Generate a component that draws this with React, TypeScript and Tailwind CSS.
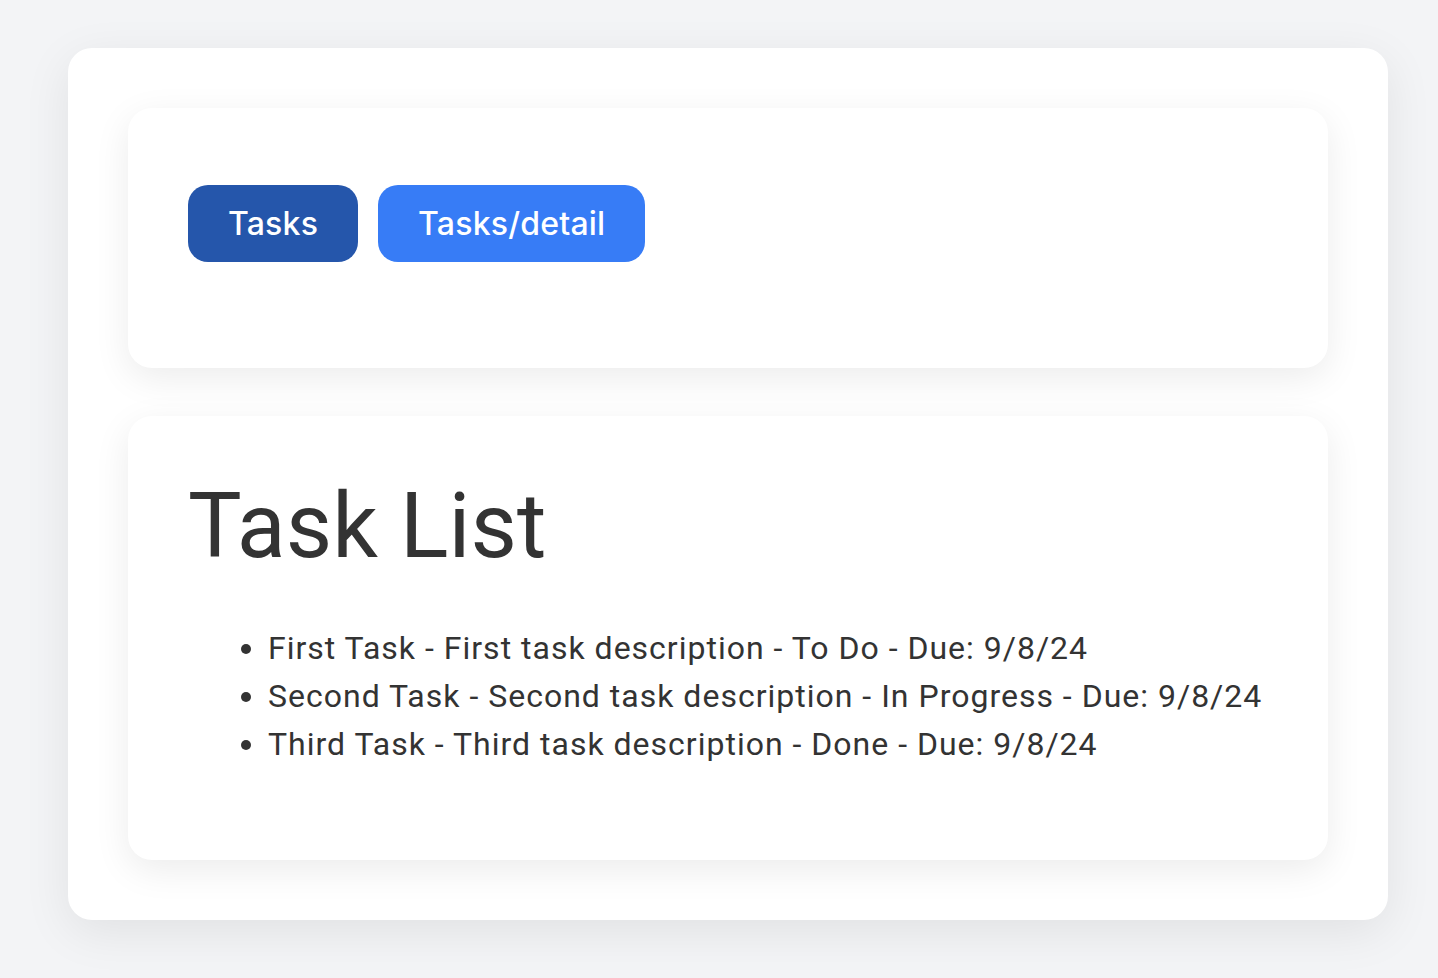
import React from "react";

export default function App() {
  const tasks = [
    "First Task - First task description - To Do - Due: 9/8/24",
    "Second Task - Second task description - In Progress - Due: 9/8/24",
    "Third Task - Third task description - Done - Due: 9/8/24",
  ];
  return (
    <div className="min-h-[978px] w-full bg-[#f3f4f6] pt-[48px] pb-[58px] pl-[68px]" style={{ fontFamily: "Roboto, 'Noto Sans', sans-serif" }}>
      <div className="w-[1320px] rounded-[24px] bg-white p-[60px] shadow-[0_12px_48px_rgba(0,0,0,0.08)] flex flex-col gap-[48px]">
        <div className="rounded-[24px] bg-white px-[60px] pt-[77px] pb-[106px] shadow-[0_10px_36px_rgba(0,0,0,0.08)]">
          <div className="flex gap-[20px]" style={{ fontFamily: "Inter, 'Noto Sans', sans-serif" }}>
            <button className="h-[77px] rounded-[20px] bg-[#2556ab] px-[40px] text-[32px] font-medium tracking-[0.2px] text-white">Tasks</button>
            <button className="h-[77px] rounded-[20px] bg-[#377cf6] px-[40px] text-[32px] font-medium tracking-[0.2px] text-white">Tasks/detail</button>
          </div>
        </div>
        <div className="rounded-[24px] bg-white px-[60px] pt-[60px] pb-[92px] shadow-[0_10px_36px_rgba(0,0,0,0.08)]">
          <h1 className="text-[90px] leading-[1.13] text-[#333333]">Task List</h1>
          <ul className="mt-[46px] list-disc pl-[80px] text-[32px] leading-[48px] text-[#333333] tracking-[1px]">
            {tasks.map((t) => (
              <li key={t}>{t}</li>
            ))}
          </ul>
        </div>
      </div>
    </div>
  );
}
